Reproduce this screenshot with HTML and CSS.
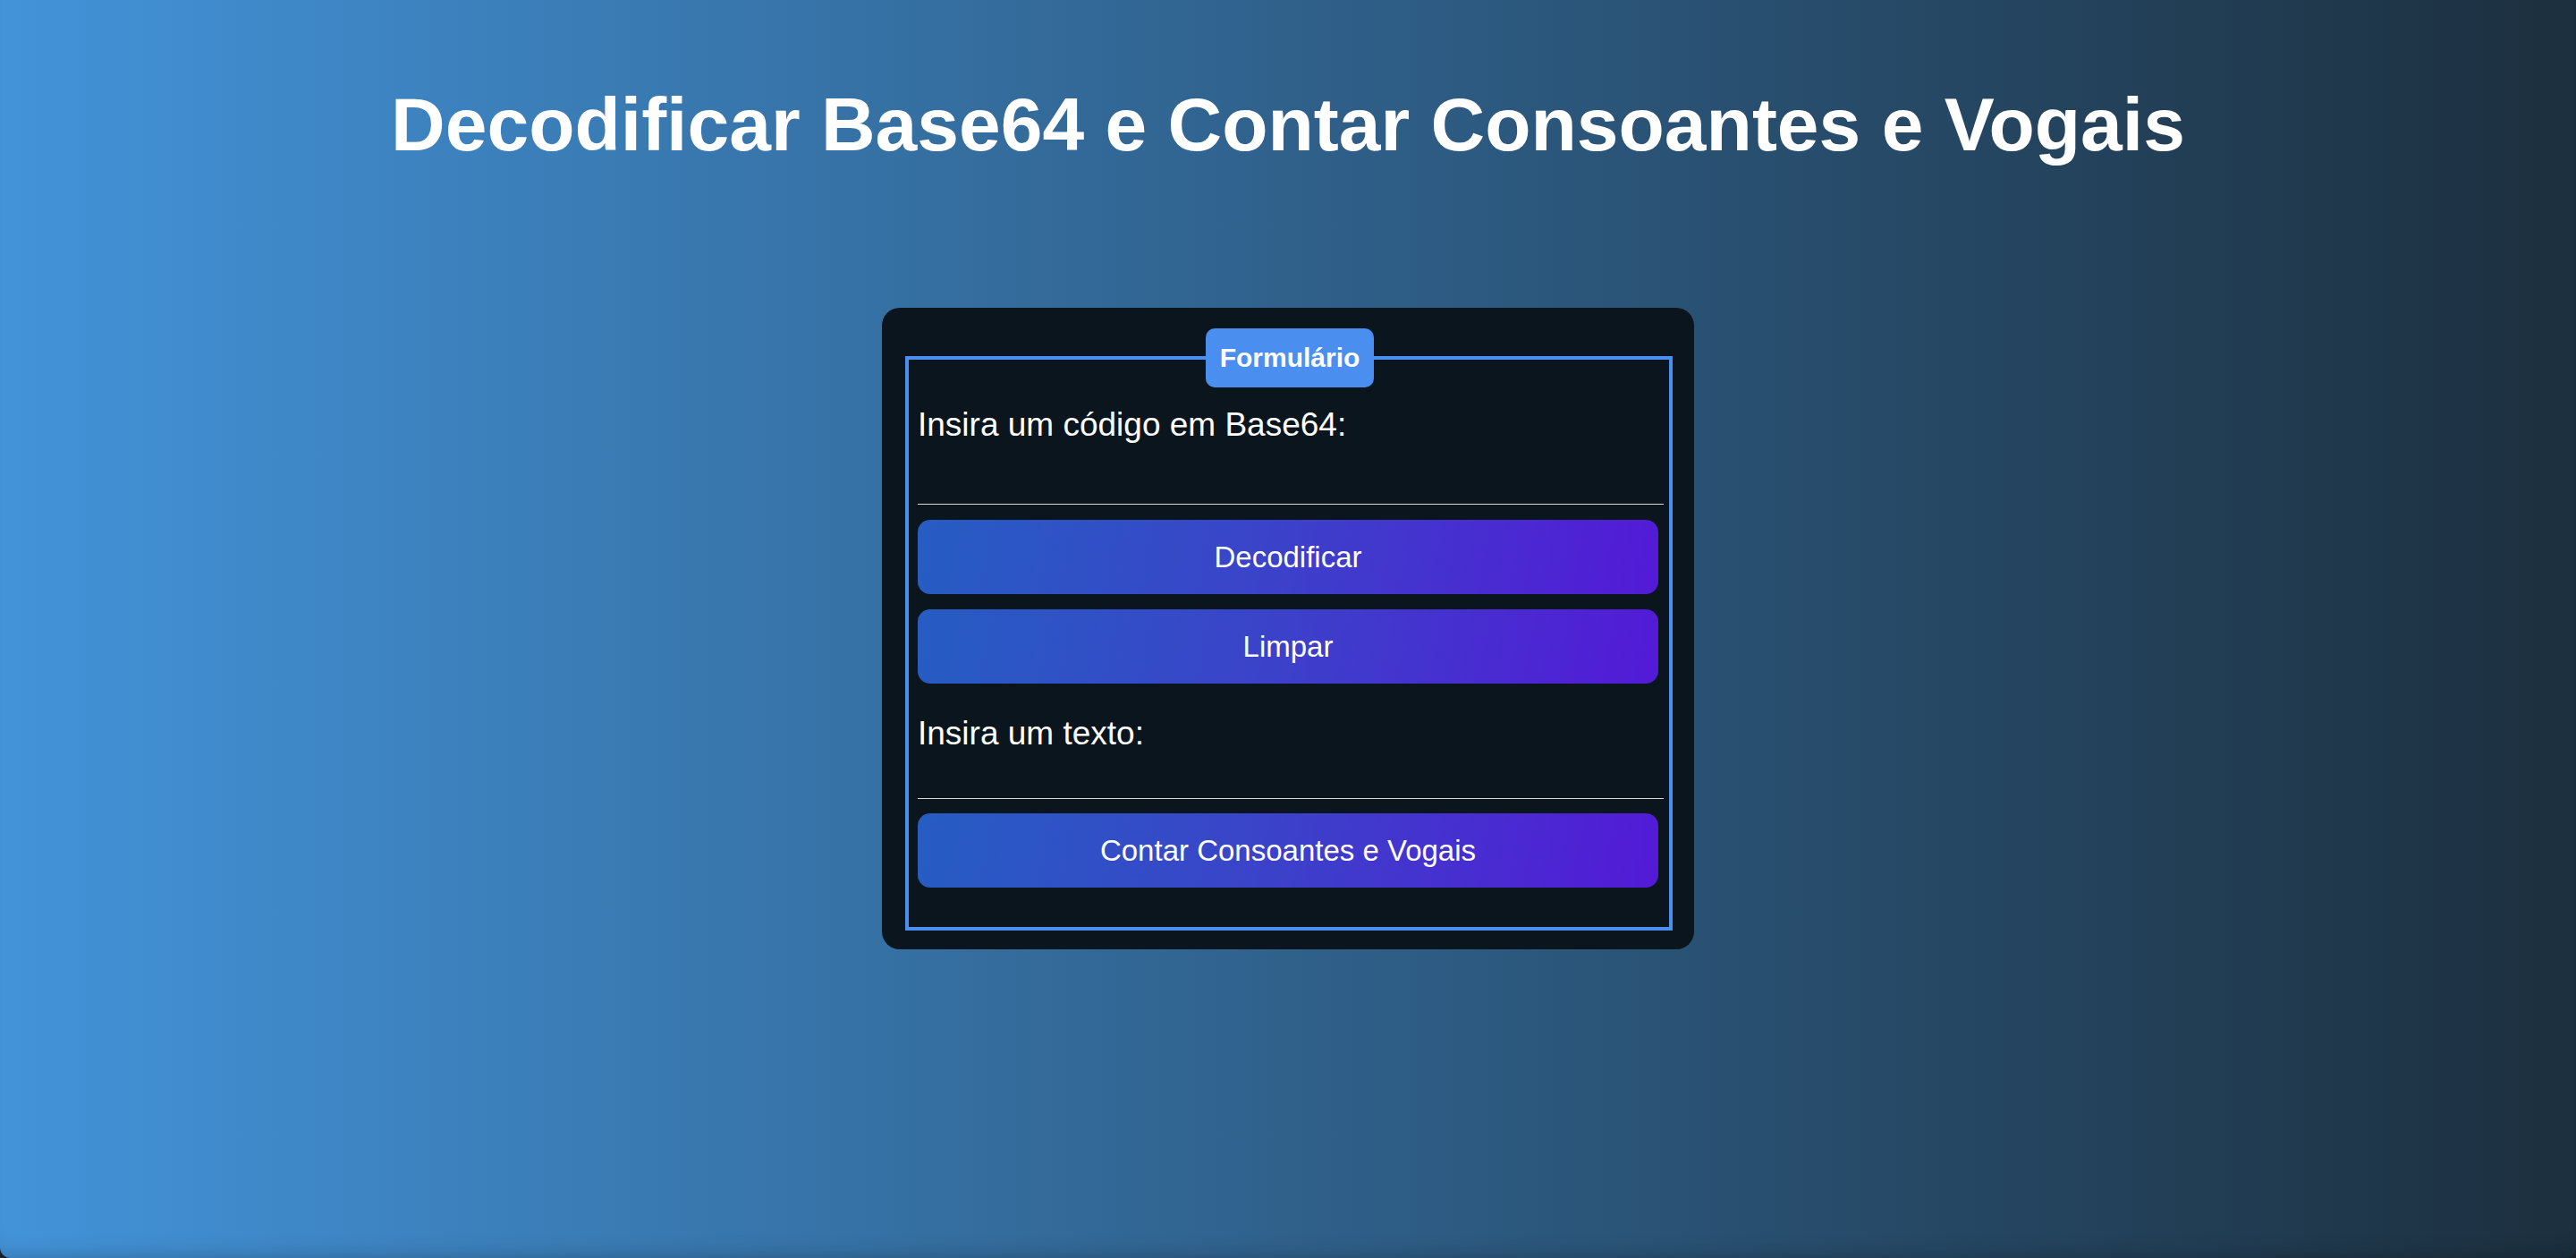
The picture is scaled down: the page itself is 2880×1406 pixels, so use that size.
FILE: index.html
```html
<!DOCTYPE html>
<html lang="pt-BR">
<head>
<meta charset="utf-8">
<title>Decodificar Base64 e Contar Consoantes e Vogais</title>
<link rel="stylesheet" href="styles.css">
</head>
<body>
<div class="page">
  <h1 class="title">Decodificar Base64 e Contar Consoantes e Vogais</h1>
  <main class="card">
    <fieldset class="form-box">
      <legend class="form-legend">Formulário</legend>
      <div class="form-body">
        <label class="field-label" for="b64">Insira um código em Base64:</label>
        <input class="field-input field-input--first" id="b64" type="text">
        <button class="action" type="button">Decodificar</button>
        <button class="action" type="button">Limpar</button>
        <label class="field-label field-label--second" for="txt">Insira um texto:</label>
        <input class="field-input" id="txt" type="text">
        <button class="action action--last" type="button">Contar Consoantes e Vogais</button>
      </div>
    </fieldset>
  </main>
</div>
</body>
</html>
```

FILE: styles.css
```css
* { box-sizing: border-box; }

html {
  background: #15202b;
  height: 100%;
}

body {
  margin: 0;
  font-family: "Liberation Sans", Arial, sans-serif;
  color: #ffffff;
}

.page {
  min-height: 100vh;
  background: linear-gradient(90deg, #4393d9 0%, #1c2f3e 100%);
  border-radius: 0 0 12px 12px;
  box-shadow: inset 0 -24px 24px -24px rgba(0, 0, 0, 0.25);
  display: flex;
  flex-direction: column;
  align-items: center;
  padding-top: 91px;
}

.title {
  margin: 0;
  font-size: 84px;
  font-weight: 700;
  line-height: normal;
  text-align: center;
  color: #ffffff;
}

.card {
  margin-top: 156px;
  width: 908px;
  background: #0b151e;
  border-radius: 20px;
  padding: 23px 24px 21px 26px;
}

.form-box {
  margin: 0;
  border: 4px solid #4a8ef0;
  padding: 20px 8px 44px 10px;
  min-width: 0;
}

.form-legend {
  margin: 0 auto;
  background: #4a8ef0;
  color: #ffffff;
  font-weight: 700;
  font-size: 30px;
  line-height: 34px;
  padding: 16px 16px;
  border-radius: 10px;
}

.form-body {
  display: flex;
  flex-direction: column;
  align-items: flex-start;
}

.field-label {
  display: block;
  font-size: 37px;
  line-height: 44px;
  color: #ffffff;
}

.field-label--second {
  margin-top: 17px;
}

.field-input {
  display: block;
  width: calc(100% + 2px);
  height: 51px;
  margin: 0 0 16px 0;
  padding: 0 2px;
  background: transparent;
  border: none;
  border-bottom: 1px solid #d9d9d9;
  color: #ffffff;
  font-family: "Liberation Sans", Arial, sans-serif;
  font-size: 32px;
  outline: none;
}

.field-input--first {
  margin-top: 16px;
  margin-bottom: 17px;
}

.action {
  display: block;
  width: calc(100% - 4px);
  height: 83px;
  margin: 0 0 17px 0;
  border: none;
  border-radius: 14px;
  background: linear-gradient(100deg, #265dc3 0%, #3a44c9 45%, #531ad7 100%);
  color: #ffffff;
  font-family: "Liberation Sans", Arial, sans-serif;
  font-size: 33px;
  cursor: pointer;
}

.action--last {
  margin-bottom: 0;
}
```
